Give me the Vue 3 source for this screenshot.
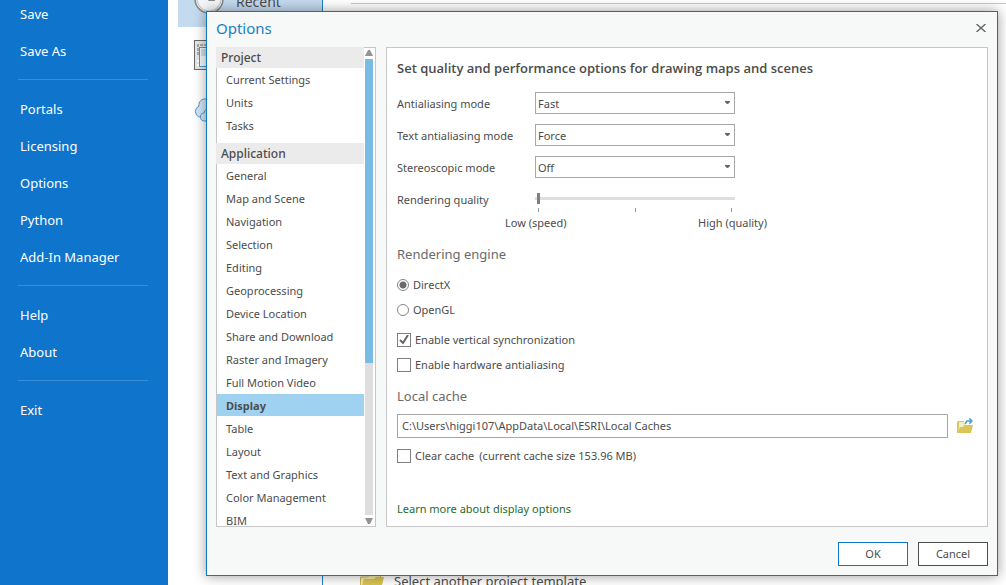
<script setup>
import { ref } from 'vue'

const navGroups = [
  ['Save', 'Save As'],
  ['Portals', 'Licensing', 'Options', 'Python', 'Add-In Manager'],
  ['Help', 'About'],
  ['Exit'],
]

const sections = [
  { title: 'Project', items: ['Current Settings', 'Units', 'Tasks'] },
  {
    title: 'Application',
    items: [
      'General', 'Map and Scene', 'Navigation', 'Selection', 'Editing',
      'Geoprocessing', 'Device Location', 'Share and Download',
      'Raster and Imagery', 'Full Motion Video', 'Display', 'Table',
      'Layout', 'Text and Graphics', 'Color Management', 'BIM',
    ],
  },
]
const current = ref('Display')

const modes = ref([
  { id: 'aa', label: 'Antialiasing mode', value: 'Fast', choices: ['None', 'Fast', 'Best'] },
  { id: 'text-aa', label: 'Text antialiasing mode', value: 'Force', choices: ['None', 'Normal', 'Force'] },
  { id: 'stereo', label: 'Stereoscopic mode', value: 'Off', choices: ['Off', 'Anaglyph'] },
])
const quality = ref(0)
const engine = ref('DirectX')
const vsync = ref(true)
const hardware = ref(false)
const clearCache = ref(false)
const cachePath = ref('C:\\Users\\higgi107\\AppData\\Local\\ESRI\\Local Caches')
</script>

<template>
  <div class="app">
    <nav class="sidebar">
      <ul v-for="(group, i) in navGroups" :key="i">
        <li v-for="name in group" :key="name"><a href="#">{{ name }}</a></li>
      </ul>
    </nav>

    <main class="backstage">
      <div class="sources">
        <button class="source active" type="button">
          <svg width="30" height="30" viewBox="0 0 30 30" aria-hidden="true">
            <circle cx="15" cy="15" r="14" fill="#f3f5f6" stroke="#858585" stroke-width="1.5" />
            <circle cx="15" cy="15" r="12" fill="none" stroke="#c8cdd1" stroke-width="1.5" />
            <path d="M15 6v10h6" fill="none" stroke="#666" stroke-width="1.5" />
          </svg>
          <span>Recent</span>
        </button>
        <button class="source" type="button" aria-label="Computer">
          <svg width="32" height="32" viewBox="0 0 32 32" aria-hidden="true">
            <rect x="0.5" y="1.5" width="31" height="29" fill="#e8e8e8" stroke="#6a6a6a" />
            <path d="M4 16V6h8" fill="none" stroke="#aaa" stroke-width="2" stroke-dasharray="3 1" />
            <path d="M4 21v8" fill="none" stroke="#fff" stroke-width="2" stroke-dasharray="2 2" />
            <rect x="5.500" y="8.500" width="24" height="19" fill="#f6f8fa" stroke="#4a9bd5" />
            <rect x="7" y="10" width="21" height="7" fill="#c9dff2" />
          </svg>
        </button>
        <button class="source" type="button" aria-label="Portal">
          <svg width="32" height="26" viewBox="0 0 32 26" aria-hidden="true">
            <path d="M5 19a6 6 0 0 1 0-11a6 6 0 0 1 7-7a8 8 0 0 1 14 5v13z" fill="#d3e5f5" stroke="#4a9bd5" />
            <path d="M11 23a4 4 0 0 1-1-8a5 5 0 0 1 7-4a6 6 0 0 1 10 4v8z" fill="#d3e5f5" stroke="#4a9bd5" />
          </svg>
        </button>
      </div>
      <div class="templates">
        <hr />
        <a href="#" class="pick">
          <svg width="26" height="20" viewBox="0 0 26 20" aria-hidden="true">
            <path d="M1.500 17V6h7l2-2h11v4" fill="#f3e9a8" stroke="#cdb84a" />
            <path d="M2 18L5 8h10l2-2h8l-3 12z" fill="#d8c352" />
          </svg>
          <span>Select another project template</span>
        </a>
      </div>
    </main>

    <section class="dialog" role="dialog" aria-labelledby="dialog-title">
      <header>
        <h1 id="dialog-title">Options</h1>
        <button class="close" type="button" aria-label="Close">
          <svg width="10" height="8" viewBox="0 0 10 8" aria-hidden="true">
            <path d="M0.500 0l9 8M9.500 0l-9 8" fill="none" stroke="#666" stroke-width="1.400" />
          </svg>
        </button>
      </header>

      <div class="body">
        <div class="categories">
          <div class="list">
            <section v-for="s in sections" :key="s.title">
              <h2>{{ s.title }}</h2>
              <button
                v-for="item in s.items"
                :key="item"
                type="button"
                :class="{ selected: item === current }"
                @click="current = item"
              >{{ item }}</button>
            </section>
          </div>
          <div class="scrollbar" aria-hidden="true">
            <svg width="8" height="6" viewBox="0 0 8 6"><path d="M0 6L3 0h2l3 6z" fill="#939393" /></svg>
            <div class="track"><div class="thumb"></div></div>
            <svg width="8" height="6" viewBox="0 0 8 6"><path d="M0 0h8L5 6H3z" fill="#939393" /></svg>
          </div>
        </div>

        <form class="panel" @submit.prevent>
          <h2 class="title">Set quality and performance options for drawing maps and scenes</h2>

          <div class="fields">
            <template v-for="m in modes" :key="m.id">
              <label :for="m.id">{{ m.label }}</label>
              <div class="select">
                <select :id="m.id" v-model="m.value">
                  <option v-for="c in m.choices" :key="c">{{ c }}</option>
                </select>
                <svg width="5" height="3" viewBox="0 0 5 3" aria-hidden="true"><path d="M0 0h5v1L3 3H2L0 1z" fill="#666" /></svg>
              </div>
            </template>
            <label for="quality">Rendering quality</label>
            <input id="quality" v-model.number="quality" type="range" min="0" max="2" />
          </div>
          <div class="scale">
            <div class="ticks"><i></i><i></i><i></i></div>
            <div class="ends"><span>Low (speed)</span><span>High (quality)</span></div>
          </div>

          <h3>Rendering engine</h3>
          <label class="option"><input v-model="engine" type="radio" name="engine" value="DirectX" />DirectX</label>
          <label class="option"><input v-model="engine" type="radio" name="engine" value="OpenGL" />OpenGL</label>
          <label class="option spaced">
            <span class="box">
              <input v-model="vsync" type="checkbox" />
              <svg v-if="vsync" width="10" height="10" viewBox="0 0 10 10" aria-hidden="true"><path d="M1 5l3 3l5-8" fill="none" stroke="#666" stroke-width="2" /></svg>
            </span>
            Enable vertical synchronization
          </label>
          <label class="option">
            <span class="box"><input v-model="hardware" type="checkbox" /></span>
            Enable hardware antialiasing
          </label>

          <h3><label for="cache">Local cache</label></h3>
          <div class="path">
            <input id="cache" v-model="cachePath" type="text" />
            <button type="button" aria-label="Browse">
              <svg width="16" height="16" viewBox="0 0 16 16" aria-hidden="true">
                <path d="M0 15V4l1-1h6v1H2v5L1 15z" fill="#d9c558" />
                <path d="M2 4h6v3h6v1H6L5 9H3L2 12z" fill="#f4edc6" />
                <path d="M0 15L3 9h3l1-2h9l-2 8z" fill="#d9c558" />
                <path d="M8 6l2-3h4" fill="none" stroke="#4a9fd8" stroke-width="1.500" />
                <path d="M12 0h1l3 3l-3 3h-1l1-3z" fill="#4a9fd8" />
              </svg>
            </button>
          </div>
          <label class="option spaced">
            <span class="box"><input v-model="clearCache" type="checkbox" /></span>
            Clear cache <span class="note">(current cache size 153.96 MB)</span>
          </label>
          <a href="#" class="more">Learn more about display options</a>
        </form>
      </div>

      <footer>
        <button class="ok" type="button">OK</button>
        <button type="button">Cancel</button>
      </footer>
    </section>
  </div>
</template>

<style>
body {
  margin: 0;
  background: #fff;
}
</style>

<style scoped>
* {
  box-sizing: border-box;
}
.app {
  position: relative;
  display: flex;
  height: 100vh;
  overflow: hidden;
  font: 11px/16px "Noto Sans", "Open Sans", sans-serif;
  color: #4c4c4c;
}
button,
input,
select {
  font: inherit;
  color: inherit;
  margin: 0;
  padding: 0;
  border: 0;
  background: none;
}
a {
  text-decoration: none;
}
h1,
h2,
h3 {
  margin: 0;
  font-weight: 400;
}

/* Sidebar */
.sidebar {
  flex: none;
  width: 168px;
  padding: 0 20px 0 18px;
  background: #0f74cb;
}
.sidebar ul {
  margin: 0;
  padding: 0;
  list-style: none;
}
.sidebar ul:first-child {
  margin-top: -4px;
}
.sidebar ul + ul {
  margin-top: 9px;
  padding-top: 11px;
  border-top: 1px solid #3a8dd8;
}
.sidebar a {
  display: block;
  padding-left: 2px;
  font-size: 13px;
  line-height: 37px;
  color: #fff;
}

/* Page behind the dialog */
.backstage {
  flex: 1;
  display: flex;
  padding-left: 10px;
}
.sources {
  flex: none;
  width: 145px;
  border-right: 1px solid #2080c4;
}
.source {
  display: flex;
  align-items: center;
  gap: 12px;
  width: 100%;
  height: 56px;
  padding-left: 16px;
  font-size: 14px;
}
.source.active {
  margin-top: -29px;
  background: #c4daef;
}
.source.active span {
  padding-top: 6px;
}
.templates {
  flex: 1;
  display: flex;
  flex-direction: column;
  justify-content: space-between;
  padding: 3px 0 0 28px;
}
hr {
  width: 100%;
  margin: 0;
  border: 0;
  border-top: 1px solid #c6c6c6;
}
.pick {
  display: flex;
  align-items: center;
  gap: 9px;
  height: 20px;
  margin: 0 0 -6px 8px;
  font-size: 13px;
  color: #4c4c4c;
}

/* Dialog */
.dialog {
  position: absolute;
  inset: 11px 8px 9px 206px;
  display: flex;
  flex-direction: column;
  padding: 0 9px 9px;
  border: 1px solid #0f76b8;
  background: #f7f9f9;
  box-shadow: 0 0 12px rgba(0, 0, 0, 0.4);
}
header {
  display: flex;
  align-items: center;
  justify-content: space-between;
  height: 35px;
  padding-bottom: 3px;
}
h1 {
  font-size: 15px;
  line-height: 20px;
  color: #1a80c8;
}
.close {
  display: flex;
  padding: 2px;
}
.body {
  flex: 1;
  min-height: 0;
  display: flex;
  gap: 10px;
}

.categories {
  flex: none;
  width: 160px;
  display: flex;
  border: 1px solid #c6c6c6;
  background: #fff;
}
.list {
  flex: 1;
  overflow: hidden;
  margin: -1px 0 0 -1px;
}
.list section + section {
  margin-top: 7px;
}
.list h2 {
  padding: 1px 0 0 5px;
  font-size: 12px;
  font-weight: 500;
  line-height: 20px;
  background: #ebebeb;
}
.list button {
  display: block;
  width: 100%;
  height: 22px;
  margin: 0 0 1px 1px;
  padding: 2px 0 0 9px;
  text-align: left;
}
.list .selected {
  font-weight: 700;
  background: #9fd2f1;
}
.scrollbar {
  flex: none;
  display: flex;
  flex-direction: column;
  gap: 3px;
  padding: 2px 2px 2px 1px;
}
.track {
  flex: 1;
  background: #dedede;
}
.thumb {
  height: 66.67%;
  background: #79bbe5;
}

.panel {
  flex: 1;
  min-width: 0;
  padding: 10px 14px 0 10px;
  border: 1px solid #c6c6c6;
  background: #fff;
}
.title {
  font-family: "Open Sans", "Noto Sans", sans-serif;
  font-size: 13px;
  font-weight: 600;
  line-height: 20px;
}
.fields {
  display: grid;
  grid-template-columns: 138px 200px;
  grid-auto-rows: 22px;
  row-gap: 10px;
  align-items: center;
  margin-top: 14px;
}
.fields label {
  padding-top: 2px;
}
.select {
  position: relative;
}
.select svg {
  position: absolute;
  right: 5px;
  top: 9px;
  pointer-events: none;
}
select {
  appearance: none;
  display: block;
  width: 100%;
  height: 22px;
  padding: 1px 0 0 2px;
  border: 1px solid #a6a6a6;
  background: #fff;
}
input[type="range"] {
  appearance: none;
  height: 11px;
  margin-bottom: 2px;
  background: linear-gradient(#dedede, #dedede) center / 100% 3px no-repeat;
}
input[type="range"]::-webkit-slider-thumb {
  appearance: none;
  width: 7px;
  height: 11px;
  border: solid transparent;
  border-width: 0 2px;
  background: #808080;
  background-clip: padding-box;
}
.scale {
  width: 200px;
  margin: -2px 0 13px 138px;
}
.ticks {
  display: flex;
  justify-content: space-between;
  padding: 0 3px;
}
.ticks i {
  width: 1px;
  height: 4px;
  background: #999;
}
.ends {
  display: flex;
  justify-content: space-between;
  margin: 3px -32px 0 -30px;
}
h3 {
  margin: 9px 0 8px;
  font-size: 13px;
  line-height: 20px;
  color: #6a6a6a;
}
.option {
  display: flex;
  align-items: center;
  gap: 4px;
  width: fit-content;
  height: 25px;
}
.option.spaced {
  margin-top: 5px;
}
.note {
  margin-left: 1px;
}
input[type="radio"] {
  appearance: none;
  width: 12px;
  height: 12px;
  border: 1px solid #858585;
  border-radius: 50%;
  background: #fff;
}
input[type="radio"]:checked {
  background: radial-gradient(circle, #6a6a6a 3px, #fff 4px);
}
.box {
  display: grid;
  place-items: center;
}
.box > * {
  grid-area: 1 / 1;
}
.box svg {
  pointer-events: none;
}
input[type="checkbox"] {
  appearance: none;
  width: 14px;
  height: 14px;
  border: 1px solid #808080;
  background: #fff;
}
.path {
  display: flex;
  align-items: center;
  gap: 9px;
}
.path input {
  flex: 1;
  min-width: 0;
  height: 24px;
  padding: 0 4px 2px;
  border: 1px solid #a6a6a6;
  background: #fff;
}
.path button {
  display: flex;
}
.more {
  display: block;
  width: fit-content;
  margin-top: 33px;
  color: #1c6b32;
}

footer {
  display: flex;
  justify-content: flex-end;
  gap: 10px;
  padding-top: 15px;
}
footer button {
  width: 70px;
  height: 24px;
  border: 1px solid #4c4c4c;
  background: #fff;
}
footer .ok {
  border-color: #0f74cb;
}
</style>
